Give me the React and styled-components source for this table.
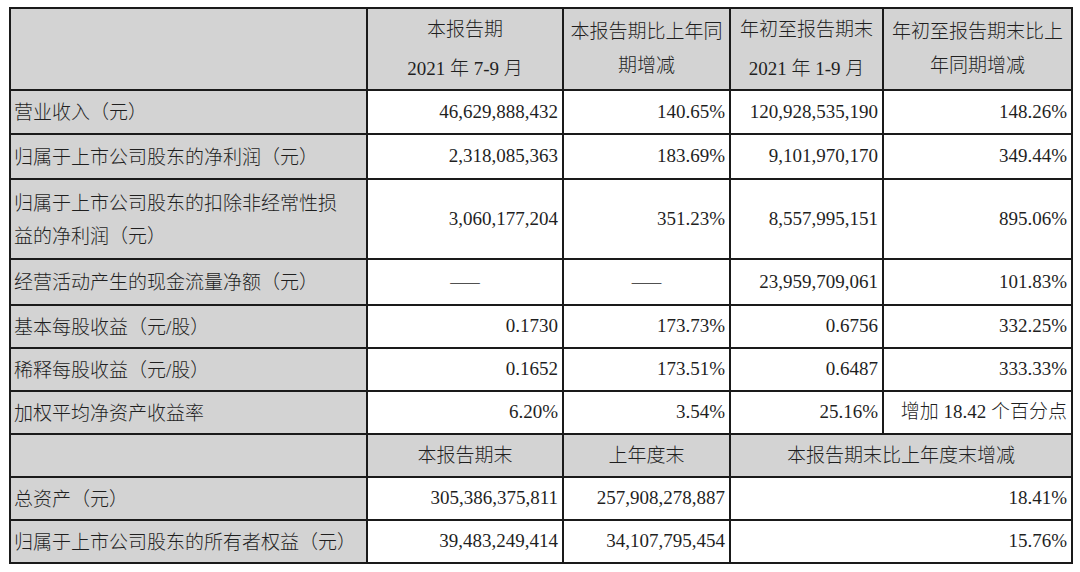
import React from 'react';
import styled, {createGlobalStyle} from 'styled-components';

const GlobalStyle = createGlobalStyle`
    html, body {
        margin: 0;
        padding: 0;
        background: #ffffff;
    }
    body {
        font-family: "Liberation Serif", "Noto Sans CJK SC", serif;
        font-weight: 300;
        color: #1f1f1f;
    }
`;

const Page = styled.div`
    width: 1080px;
    height: 572px;
    padding: 7px 0 0 9px;
    box-sizing: border-box;
    background: #fff;
`;

const Table = styled.table`
    border-collapse: collapse;
    table-layout: fixed;
    width: 1062px;
    font-size: 19px;
    border: 2px solid #1a1a1a;
`;

const Row = styled.tr`
    height: ${p => p.h}px;
`;

const Cell = styled.td`
    border: 2px solid #1a1a1a;
    padding: 0 4px 0 3px;
    vertical-align: middle;
    white-space: nowrap;
    line-height: 1.2;
    box-sizing: border-box;
`;

const LabelCell = styled(Cell)`
    background: #d3d3d3;
    text-align: left;
    line-height: 33px;
    padding-top: 1px;
`;

const HeadCell = styled(Cell)`
    background: #d3d3d3;
    text-align: center;
    line-height: ${p => p.lh || 34}px;
    padding: 0;
`;

const NumCell = styled(Cell)`
    text-align: ${p => (p.center ? 'center' : 'right')};
`;

const Line = styled.div``;

const Dash = styled.span`
    font-family: "Noto Sans CJK SC", sans-serif;
    font-weight: 300;
    letter-spacing: -1px;
`;

const rows = [
    {label: '营业收入（元）', h: 44, v: ['46,629,888,432', '140.65%', '120,928,535,190', '148.26%']},
    {label: '归属于上市公司股东的净利润（元）', h: 45, v: ['2,318,085,363', '183.69%', '9,101,970,170', '349.44%']},
    {
        label: ['归属于上市公司股东的扣除非经常性损', '益的净利润（元）'],
        h: 80,
        v: ['3,060,177,204', '351.23%', '8,557,995,151', '895.06%'],
    },
    {label: '经营活动产生的现金流量净额（元）', h: 46, v: [null, null, '23,959,709,061', '101.83%']},
    {label: '基本每股收益（元/股）', h: 43, v: ['0.1730', '173.73%', '0.6756', '332.25%']},
    {label: '稀释每股收益（元/股）', h: 43, v: ['0.1652', '173.51%', '0.6487', '333.33%']},
    {label: '加权平均净资产收益率', h: 43, v: ['6.20%', '3.54%', '25.16%', '增加 18.42 个百分点']},
];

const balance = [
    {label: '总资产（元）', v: ['305,386,375,811', '257,908,278,887', '18.41%']},
    {label: '归属于上市公司股东的所有者权益（元）', v: ['39,483,249,414', '34,107,795,454', '15.76%']},
];

const renderLabel = label =>
    Array.isArray(label) ? label.map(l => <Line key={l}>{l}</Line>) : label;

export default function App() {
    return (
        <Page>
            <GlobalStyle/>
            <Table>
                <colgroup>
                    <col style={{width: 357}}/>
                    <col style={{width: 196}}/>
                    <col style={{width: 167}}/>
                    <col style={{width: 153}}/>
                    <col style={{width: 189}}/>
                </colgroup>
                <tbody>
                    <Row h={82}>
                        <HeadCell/>
                        <HeadCell lh={39}>
                            <Line>本报告期</Line>
                            <Line>2021 年 7-9 月</Line>
                        </HeadCell>
                        <HeadCell>
                            <Line>本报告期比上年同</Line>
                            <Line>期增减</Line>
                        </HeadCell>
                        <HeadCell lh={39}>
                            <Line>年初至报告期末</Line>
                            <Line>2021 年 1-9 月</Line>
                        </HeadCell>
                        <HeadCell>
                            <Line>年初至报告期末比上</Line>
                            <Line>年同期增减</Line>
                        </HeadCell>
                    </Row>
                    {rows.map((r, i) => (
                        <Row h={r.h} key={i}>
                            <LabelCell>{renderLabel(r.label)}</LabelCell>
                            {r.v.map((val, j) =>
                                val === null ? (
                                    <NumCell center key={j}><Dash>——</Dash></NumCell>
                                ) : (
                                    <NumCell key={j}>{val}</NumCell>
                                )
                            )}
                        </Row>
                    ))}
                    <Row h={43}>
                        <HeadCell/>
                        <HeadCell>本报告期末</HeadCell>
                        <HeadCell>上年度末</HeadCell>
                        <HeadCell colSpan={2}>本报告期末比上年度末增减</HeadCell>
                    </Row>
                    {balance.map((r, i) => (
                        <Row h={43} key={i}>
                            <LabelCell>{r.label}</LabelCell>
                            <NumCell>{r.v[0]}</NumCell>
                            <NumCell>{r.v[1]}</NumCell>
                            <NumCell colSpan={2}>{r.v[2]}</NumCell>
                        </Row>
                    ))}
                </tbody>
            </Table>
        </Page>
    );
}
